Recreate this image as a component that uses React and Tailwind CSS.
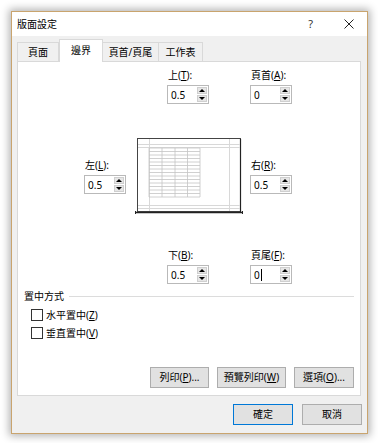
import React from "react";

const font = { fontFamily: '"Noto Sans", "Noto Sans CJK TC", sans-serif' };

function Mn({ pre, k, post = "" }) {
  return (
    <span>
      {pre}(<u className="underline underline-offset-1">{k}</u>){post}
    </span>
  );
}

function Spin({ value, caret }) {
  return (
    <div className="flex h-[19px] w-[42px] border border-[#b9b9b9] bg-white">
      <div className="flex flex-1 items-center pl-[3px] text-[10px] leading-none text-black">
        {value}
        {caret && <span className="ml-[1px] h-[12px] w-[1px] bg-black" />}
      </div>
      <div className="flex w-[11px] flex-col gap-[1px] py-[1px] pr-[1px]">
        <div className="flex flex-1 items-center justify-center border border-[#cfcfcf] bg-[#e6e6e6]">
          <span className="h-0 w-0 border-x-[3px] border-b-[3px] border-x-transparent border-b-black" />
        </div>
        <div className="flex flex-1 items-center justify-center border border-[#cfcfcf] bg-[#e6e6e6]">
          <span className="h-0 w-0 border-x-[3px] border-t-[3px] border-x-transparent border-t-black" />
        </div>
      </div>
    </div>
  );
}

function Field({ label, value, caret }) {
  return (
    <div className="flex w-[42px] flex-col">
      <div className="h-[14px] pl-[1px] text-[10px] leading-[14px] text-black">{label}</div>
      <div className="mt-[3px]">
        <Spin value={value} caret={caret} />
      </div>
    </div>
  );
}

function Preview() {
  const cols = [14, 27, 40, 52.5, 65];
  const rows = Array.from({ length: 15 }, (_, i) => 11 + i * 3.5);
  return (
    <svg width="108" height="79" viewBox="0 0 108 79">
      <rect x="2.5" y="1.5" width="103" height="73" fill="#fff" stroke="#444" />
      <line x1="105.5" y1="2" x2="105.5" y2="75" stroke="#222" strokeWidth="1.2" />
      <g stroke="#d8d8d8" strokeWidth="1">
        <line x1="14.5" y1="2" x2="14.5" y2="74" />
        <line x1="94.5" y1="2" x2="94.5" y2="74" />
        <line x1="3" y1="7.5" x2="105" y2="7.5" />
        <line x1="3" y1="10.5" x2="105" y2="10.5" />
        <line x1="3" y1="68.5" x2="105" y2="68.5" />
        <line x1="3" y1="71.5" x2="105" y2="71.5" />
      </g>
      <g stroke="#c4c4c4" strokeWidth="0.8">
        {cols.map((x) => (
          <line key={x} x1={x} y1="11" x2={x} y2="60" />
        ))}
        {rows.map((y) => (
          <line key={y} x1="14" y1={y} x2="65" y2={y} />
        ))}
      </g>
      <line x1="0" y1="75.5" x2="108" y2="75.5" stroke="#222" strokeWidth="1.4" />
      <line x1="0.5" y1="74" x2="0.5" y2="77" stroke="#222" />
      <line x1="107.5" y1="74" x2="107.5" y2="77" stroke="#222" />
    </svg>
  );
}

function Btn({ children, w, primary }) {
  return (
    <div
      className={
        "flex h-[21px] items-center justify-center border bg-[#e1e1e1] text-[10px] text-black " +
        (primary ? "border-[#0078d7]" : "border-[#adadad]")
      }
      style={{ width: w }}
    >
      {children}
    </div>
  );
}

function Check({ children }) {
  return (
    <div className="flex h-[12px] items-center gap-[3px]">
      <div className="h-[12px] w-[12px] border border-[#333] bg-white" />
      <span className="text-[10px] leading-none text-black">{children}</span>
    </div>
  );
}

export default function App() {
  return (
    <div className="h-[443px] w-[378px] bg-white pl-[11px] pt-[11px]" style={font}>
      <div className="flex h-[423px] w-[357px] flex-col border border-[#c9a46e] bg-[#f0f0f0] shadow-[0_0_8px_2px_rgba(0,0,0,0.3)]">
        {/* title bar */}
        <div className="flex h-[24px] items-center bg-white pl-[5px] text-[10px] text-black">
          <span>版面設定</span>
          <span className="ml-auto mr-[31px] text-[11px] text-[#333]">?</span>
          <svg width="10" height="10" viewBox="0 0 10 10" className="mr-[13px]">
            <path d="M0.5 0.5 L9.5 9.5 M9.5 0.5 L0.5 9.5" stroke="#222" strokeWidth="1" />
          </svg>
        </div>

        {/* tabs */}
        <div className="flex items-end pl-[5px] pt-[3px]">
          <div className="flex h-[19px] w-[42px] items-center justify-center border border-b-0 border-[#d9d9d9] text-[10px] text-black">頁面</div>
          <div className="relative z-10 -mb-[1px] flex h-[23px] w-[44px] items-center justify-center border border-b-0 border-[#d9d9d9] bg-white pb-[2px] text-[10px] text-black">邊界</div>
          <div className="flex h-[19px] w-[56px] items-center justify-center border border-b-0 border-l-0 border-[#d9d9d9] text-[10px] text-black">頁首/頁尾</div>
          <div className="flex h-[19px] w-[44px] items-center justify-center border border-b-0 border-l-0 border-[#d9d9d9] text-[10px] text-black">工作表</div>
        </div>

        {/* panel */}
        <div className="ml-[5px] flex h-[335px] w-[344px] flex-col border border-[#d9d9d9] bg-white">
          <div className="flex gap-[41px] pl-[149px] pt-[6px]">
            <Field label={<Mn pre="上" k="T" post=":" />} value="0.5" />
            <Field label={<Mn pre="頁首" k="A" post=":" />} value="0" />
          </div>

          <div className="mt-[33px] flex items-start pl-[66px]">
            <div className="mt-[21px]">
              <Field label={<Mn pre="左" k="L" post=":" />} value="0.5" />
            </div>
            <div className="ml-[9px]">
              <Preview />
            </div>
            <div className="ml-[7px] mt-[21px]">
              <Field label={<Mn pre="右" k="R" post=":" />} value="0.5" />
            </div>
          </div>

          <div className="mt-[32px] flex gap-[41px] pl-[149px]">
            <Field label={<Mn pre="下" k="B" post=":" />} value="0.5" />
            <Field label={<Mn pre="頁尾" k="F" post=":" />} value="0" caret />
          </div>

          <div className="mt-[5px] flex items-center pl-[6px] pr-[6px]">
            <span className="text-[10px] leading-[14px] text-black">置中方式</span>
            <div className="ml-[5px] h-px flex-1 bg-[#dcdcdc]" />
          </div>

          <div className="mt-[6px] flex flex-col gap-[6px] pl-[13px]">
            <Check><Mn pre="水平置中" k="Z" /></Check>
            <Check><Mn pre="垂直置中" k="V" /></Check>
          </div>

          <div className="mt-auto flex justify-end gap-[8px] pb-[7px] pr-[6px]">
            <Btn w={59}><Mn pre="列印" k="P" post="..." /></Btn>
            <Btn w={69}><Mn pre="預覽列印" k="W" /></Btn>
            <Btn w={60}><Mn pre="選項" k="O" post="..." /></Btn>
          </div>
        </div>

        {/* footer buttons */}
        <div className="flex justify-end gap-[9px] pr-[5px] pt-[8px]">
          <Btn w={60} primary>確定</Btn>
          <Btn w={60}>取消</Btn>
        </div>
      </div>
    </div>
  );
}
